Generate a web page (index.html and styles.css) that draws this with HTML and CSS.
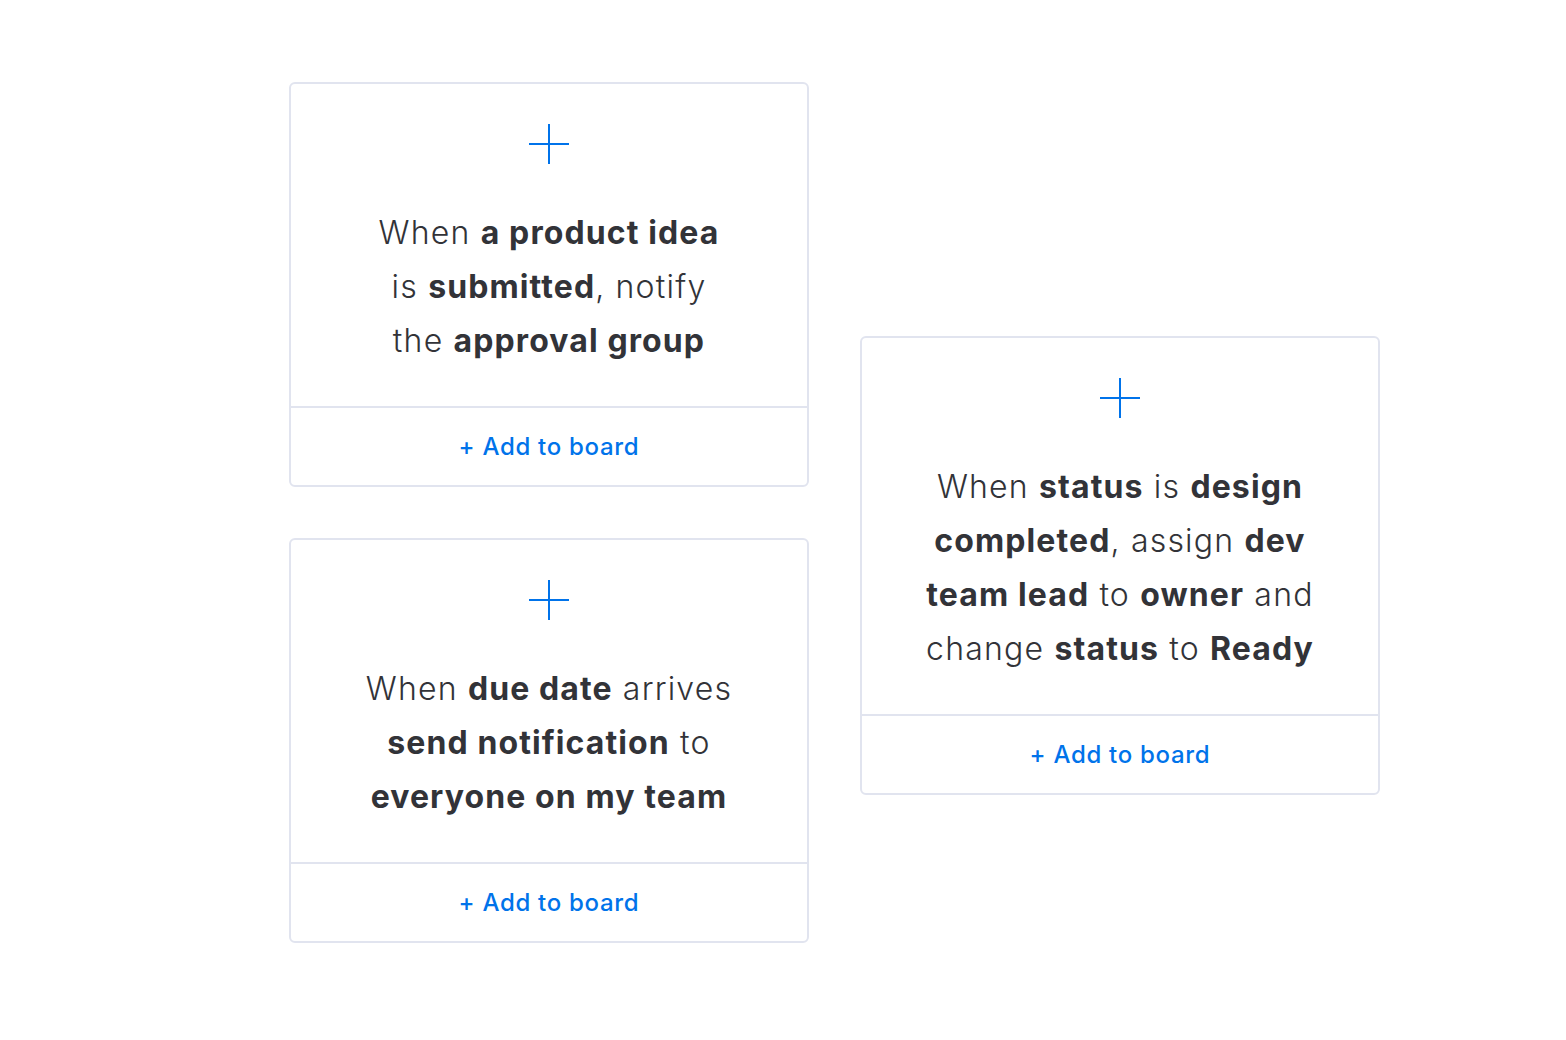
FILE: index.html
```html
<!DOCTYPE html>
<html lang="en">
<head>
<meta charset="utf-8">
<title>Automation recipes</title>
<link rel="stylesheet" href="styles.css">
</head>
<body>
<main class="board">
  <div class="col">
    <section class="card">
      <div class="card-body">
        <svg class="plus" width="40" height="40" viewBox="0 0 40 40"><path d="M20 0V40M0 20H40" stroke="#0073ea" stroke-width="2" fill="none"/></svg>
        <p class="recipe">When <b>a product idea</b><br>is <b>submitted</b>, notify<br>the <b>approval group</b></p>
      </div>
      <div class="card-foot"><span class="add">+ Add to board</span></div>
    </section>
    <section class="card">
      <div class="card-body">
        <svg class="plus" width="40" height="40" viewBox="0 0 40 40"><path d="M20 0V40M0 20H40" stroke="#0073ea" stroke-width="2" fill="none"/></svg>
        <p class="recipe">When <b>due date</b> arrives<br><b>send notification</b> to<br><b>everyone on my team</b></p>
      </div>
      <div class="card-foot"><span class="add">+ Add to board</span></div>
    </section>
  </div>
  <div class="col col-right">
    <section class="card">
      <div class="card-body">
        <svg class="plus" width="40" height="40" viewBox="0 0 40 40"><path d="M20 0V40M0 20H40" stroke="#0073ea" stroke-width="2" fill="none"/></svg>
        <p class="recipe">When <b>status</b> is <b>design</b><br><b>completed</b>, assign <b>dev</b><br><b>team lead</b> to <b>owner</b> and<br>change <b>status</b> to <b>Ready</b></p>
      </div>
      <div class="card-foot"><span class="add">+ Add to board</span></div>
    </section>
  </div>
</main>
</body>
</html>
```
FILE: styles.css
```css
* { box-sizing: border-box; }
html, body { margin: 0; padding: 0; background: #ffffff; }
body { font-family: "Inter", "Noto Sans", sans-serif; color: #323338; }
.board {
  display: grid;
  grid-template-columns: 520px 520px;
  column-gap: 51px;
  align-items: start;
  padding: 82px 0 0 289px;
}
.col { display: flex; flex-direction: column; gap: 51px; }
.col-right { margin-top: 254px; }
.card {
  border: 2px solid #e1e4ef;
  border-radius: 6px;
  background: #fff;
}
.card-body {
  display: flex;
  flex-direction: column;
  align-items: center;
  padding: 40px 0 38px;
  border-bottom: 2px solid #e1e4ef;
}
.plus { display: block; }
.recipe {
  margin: 42px 0 0;
  font-size: 32px;
  line-height: 54px;
  font-weight: 300;
  letter-spacing: 1.2px;
  text-align: center;
}
.recipe b { font-weight: 700; letter-spacing: 1.1px; }
.card-foot {
  height: 77px;
  display: flex;
  align-items: center;
  justify-content: center;
}
.add {
  color: #0073ea;
  font-size: 24px;
  font-weight: 500;
  letter-spacing: 0.7px;
}
```
